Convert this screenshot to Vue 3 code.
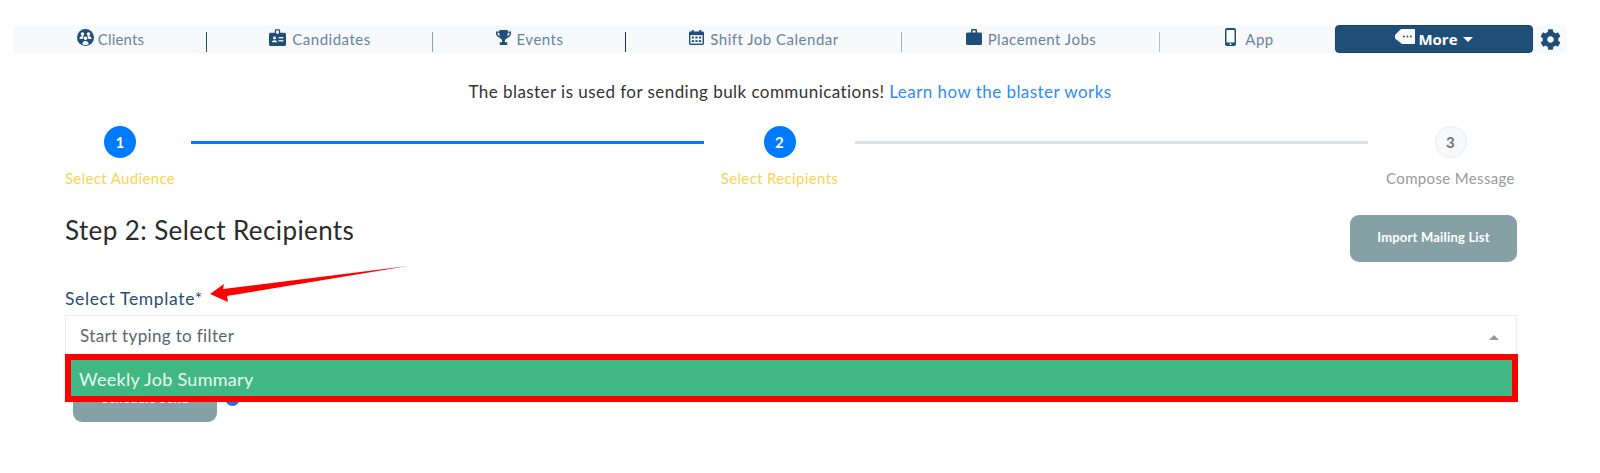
<template>
  <div class="page">
    <nav class="top-nav">
      <a v-for="item in navItems" :key="item.label" class="nav-item">
        <span class="nav-link">
          <svg class="nav-icon" :viewBox="item.box" :style="{ width: item.w + 'px', height: item.h + 'px' }" v-html="item.icon"></svg>
          <span class="nav-text">{{ item.label }}</span>
        </span>
        <i v-if="item.sep" class="nav-sep" :style="{ background: item.sep }"></i>
      </a>
      <button class="more-btn">
        <svg class="more-icon" viewBox="0 0 20 15">
          <path d="M6 0H19a1 1 0 0 1 1 1V14a1 1 0 0 1-1 1H7L0 9.500V6z" fill="#fff" />
          <circle cx="9" cy="7.500" r="1" fill="#1f4e79" />
          <circle cx="12.500" cy="7.500" r="1" fill="#1f4e79" />
          <circle cx="16" cy="7.500" r="1" fill="#1f4e79" />
        </svg>
        <span>More</span>
        <i class="more-caret"></i>
      </button>
      <svg class="gear" viewBox="0 0 512 512">
        <path fill="#1f4e79" d="M487.4 315.7l-42.6-24.6c4.3-23.2 4.3-47 0-70.2l42.6-24.6c4.9-2.8 7.1-8.6 5.5-14-11.1-35.6-30-67.8-54.7-94.6-3.8-4.1-10-5.1-14.8-2.3L380.8 110c-17.9-15.4-38.5-27.3-60.8-35.1V25.8c0-5.6-3.9-10.5-9.4-11.7-36.7-8.2-74.3-7.8-109.2 0-5.5 1.2-9.4 6.1-9.4 11.7V75c-22.2 7.9-42.8 19.8-60.8 35.1L88.7 85.5c-4.9-2.8-11-1.9-14.8 2.3-24.7 26.7-43.6 58.9-54.7 94.6-1.7 5.4.6 11.2 5.5 14L67.3 221c-4.3 23.2-4.3 47 0 70.2l-42.6 24.6c-4.9 2.8-7.1 8.6-5.5 14 11.1 35.6 30 67.8 54.7 94.6 3.8 4.1 10 5.1 14.8 2.3l42.6-24.6c17.9 15.4 38.5 27.3 60.8 35.1v49.2c0 5.6 3.9 10.5 9.4 11.7 36.7 8.2 74.3 7.8 109.2 0 5.5-1.2 9.4-6.1 9.4-11.7v-49.2c22.2-7.9 42.8-19.8 60.8-35.1l42.6 24.6c4.9 2.8 11 1.9 14.8-2.3 24.7-26.7 43.6-58.9 54.7-94.6 1.5-5.5-.7-11.3-5.6-14.1zM256 336c-44.1 0-80-35.9-80-80s35.9-80 80-80 80 35.9 80 80-35.9 80-80 80z" />
      </svg>
    </nav>

    <p class="notice">
      The blaster is used for sending bulk communications!
      <a class="notice-link">Learn how the blaster works</a>
    </p>

    <div class="content">
      <div class="stepper">
        <div class="step step-audience">
          <span class="step-dot">1</span>
          <span class="step-label">Select Audience</span>
        </div>
        <span class="step-line done"></span>
        <div class="step step-recipients">
          <span class="step-dot">2</span>
          <span class="step-label">Select Recipients</span>
        </div>
        <span class="step-line"></span>
        <div class="step step-compose todo">
          <span class="step-dot">3</span>
          <span class="step-label">Compose Message</span>
        </div>
      </div>

      <div class="head-row">
        <h2 class="step-title">Step 2: Select Recipients</h2>
        <button class="grey-btn import-btn">Import Mailing List</button>
      </div>

      <div class="form-area">
        <label class="field-label">Select Template*</label>
        <div class="select-box">
          <span>Start typing to filter</span>
          <i class="select-caret"></i>
        </div>
        <div class="below-row">
          <button class="grey-btn schedule-btn">Schedule Send</button>
          <span class="info-dot"></span>
        </div>

        <div class="option-mark">
          <div class="option">Weekly Job Summary</div>
        </div>

        <svg class="arrow" viewBox="0 0 200 40">
          <path d="M0 29L14 19L13 24L198 1L17 31L18 37z" fill="#ff0000" />
        </svg>
      </div>
    </div>
  </div>
</template>

<script setup>
const navItems = [
  {
    label: "Clients",
    box: "0 0 16 16",
    w: 17,
    h: 17,
    sep: "#1f4e79",
    icon: '<circle cx="8" cy="8" r="8" fill="#1f4e79"/><g fill="#fff"><circle cx="5.200" cy="4.800" r="1.700"/><circle cx="10.800" cy="4.800" r="1.700"/><path d="M2.300 9.500c0-2 1.200-3 2.900-3s2.900 1 2.900 3zM7.900 9.500c0-2 1.200-3 2.900-3s2.900 1 2.900 3z"/></g><circle cx="8" cy="8.800" r="2.500" fill="#1f4e79"/><circle cx="8" cy="8.800" r="1.700" fill="#fff"/><path d="M4 15c0-3 1.500-4.500 4-4.500s4 1.500 4 4.500z" fill="#1f4e79"/><path d="M5 14.300c0-2 1.200-3.100 3-3.100s3 1.100 3 3.100c-1.800.9-4.200.9-6 0z" fill="#fff"/>',
  },
  {
    label: "Candidates",
    box: "0 0 16 16",
    w: 17,
    h: 17,
    sep: "#8fa3b8",
    icon: '<path d="M1.5 3.5h4V1.2A1 1 0 0 1 6.500.2h3a1 1 0 0 1 1 1v2.300h4A1.500 1.500 0 0 1 16 5v9.500a1.500 1.500 0 0 1-1.500 1.500h-13A1.500 1.500 0 0 1 0 14.500V5a1.500 1.500 0 0 1 1.500-1.500z" fill="#1f4e79"/><rect x="6.700" y="1.400" width="2.600" height="3" fill="#f8f9fb"/><circle cx="5.200" cy="8.500" r="1.400" fill="#fff"/><path d="M2.800 12.500c0-1.300 1-2 2.400-2s2.400.7 2.400 2z" fill="#fff"/><rect x="9" y="7.600" width="4.500" height="1.200" fill="#fff"/><rect x="9" y="10.500" width="4.500" height="1.200" fill="#fff"/>',
  },
  {
    label: "Events",
    box: "0 0 16 16",
    w: 15,
    h: 15,
    sep: "#1a2f5c",
    icon: '<path d="M3.500 0h9v1.500H16v2.300c0 2.300-2.100 4.300-4.300 4.700-.6.9-1.300 1.500-2.200 1.800V13H12v3H4v-3h2.500v-2.700c-.9-.3-1.600-.9-2.200-1.800C2.100 8.100 0 6.100 0 3.800V1.500h3.500zM1.600 3v.8c0 1.100 1 2.300 2.300 2.900-.2-1-.4-2.300-.4-3.700zm12.800 0h-1.900c0 1.400-.2 2.700-.4 3.700 1.300-.6 2.300-1.800 2.300-2.900z" fill="#1f4e79"/>',
  },
  {
    label: "Shift Job Calendar",
    box: "0 0 16 16",
    w: 15,
    h: 17,
    sep: "#a3b1c0",
    icon: '<path d="M3 0h2v1.500h6V0h2v1.500h1.500A1.500 1.500 0 0 1 16 3v11.500a1.500 1.500 0 0 1-1.500 1.500h-13A1.500 1.500 0 0 1 0 14.500V3a1.500 1.500 0 0 1 1.500-1.500H3z" fill="#1f4e79"/><rect x="1.500" y="5.500" width="13" height="9" fill="#fff"/><g fill="#1f4e79"><rect x="3" y="7" width="2.400" height="2"/><rect x="6.800" y="7" width="2.400" height="2"/><rect x="10.600" y="7" width="2.400" height="2"/><rect x="3" y="10.800" width="2.400" height="2"/><rect x="6.800" y="10.800" width="2.400" height="2"/><rect x="10.600" y="10.800" width="2.400" height="2"/></g>',
  },
  {
    label: "Placement Jobs",
    box: "0 0 16 16",
    w: 16,
    h: 16,
    sep: "#b4bfca",
    icon: '<path d="M1.500 3.500H5V1.300A1.300 1.300 0 0 1 6.300 0h3.400A1.300 1.300 0 0 1 11 1.300v2.200h3.500A1.500 1.500 0 0 1 16 5v9.500a1.500 1.500 0 0 1-1.500 1.500h-13A1.500 1.500 0 0 1 0 14.500V5a1.500 1.500 0 0 1 1.500-1.500zM6.500 1.500v2h3v-2z" fill="#1f4e79"/>',
  },
  {
    label: "App",
    box: "0 0 11 18",
    w: 11,
    h: 18,
    icon: '<rect width="11" height="18" rx="2" fill="#1f4e79"/><rect x="1.500" y="2" width="8" height="12.500" fill="#fff"/><circle cx="5.500" cy="16.200" r=".9" fill="#fff"/>',
  },
];
</script>

<style>
body {
  background: #fff;
}
</style>

<style scoped>
.page {
  padding-top: 25px;
  font-family: "Lato", "Open Sans", sans-serif;
  color: #212529;
}

.top-nav {
  display: grid;
  grid-template-columns: 193px 226px 193px 276px 258px 175px 198px 34px;
  align-items: stretch;
  width: 1553px;
  height: 28px;
  margin-left: 14px;
  background: #f8f9fb;
  border-radius: 4px;
}

.nav-item {
  position: relative;
  display: flex;
  justify-content: center;
  align-items: center;
  color: #6883a0;
  font-size: 15px;
  letter-spacing: .5px;
}

.nav-link {
  display: flex;
  align-items: center;
  gap: 6px;
}

.nav-item:first-child .nav-link {
  gap: 4px;
}

.nav-item:first-child {
  letter-spacing: .2px;
}

.nav-item:nth-child(6) {
  padding-left: 4px;
}

.nav-item:nth-child(6) .nav-link {
  gap: 9px;
}

.nav-icon {
  margin-top: -4px;
}

.nav-sep {
  position: absolute;
  right: 0;
  top: 7px;
  bottom: 1px;
  width: 1px;
}

.more-btn {
  display: flex;
  justify-content: center;
  align-items: center;
  gap: 3px;
  border: 1px solid #1a4469;
  border-radius: 4px;
  background: #1f4e79;
  color: #fff;
  font: 700 15px "Open Sans", sans-serif;
  padding: 0;
}

.more-icon {
  width: 20px;
  height: 15px;
  margin-top: -6px;
}

.more-caret {
  width: 0;
  height: 0;
  margin-left: 2px;
  border-left: 5px solid transparent;
  border-right: 5px solid transparent;
  border-top: 5px solid #fff;
}

.gear {
  width: 21px;
  height: 21px;
  align-self: center;
  margin-left: 7px;
}

.notice {
  margin: 27px 0 0;
  padding-right: 20px;
  height: 24px;
  line-height: 24px;
  text-align: center;
  font-size: 17px;
  letter-spacing: .45px;
  color: #333;
}

.notice-link {
  color: #2f8cf5;
}

.content {
  margin: 0 83px 0 65px;
}

.stepper {
  display: flex;
  gap: 16px;
  margin-top: 22px;
}

.step {
  display: flex;
  flex-direction: column;
  align-items: center;
  flex-shrink: 0;
  font-size: 15px;
  letter-spacing: .35px;
  color: #fdd24e;
}

.step-audience {
  width: 110px;
}

.step-recipients {
  width: 119px;
}

.step-compose {
  width: 133px;
}

.step-dot {
  width: 32px;
  height: 32px;
  border-radius: 50%;
  background: #007bff;
  color: #fff;
  font-size: 15px;
  font-weight: 700;
  line-height: 32px;
  text-align: center;
}

.todo {
  color: #9a9a9a;
}

.todo .step-dot {
  box-sizing: border-box;
  background: #f8f9fa;
  border: 1px solid #e9ecef;
  color: #6c757d;
  line-height: 30px;
}

.step-label {
  margin-top: 11px;
  line-height: 18px;
  white-space: nowrap;
}

.step-line {
  flex: 1;
  height: 3px;
  margin-top: 15px;
  background: #dee2e6;
}

.step-line.done {
  background: #007bff;
}

.head-row {
  display: flex;
  justify-content: space-between;
  align-items: flex-start;
  margin-top: 28px;
}

.step-title {
  margin: 0;
  font-size: 26px;
  font-weight: 400;
  line-height: 30px;
  letter-spacing: .4px;
  color: #2b2b2b;
}

.grey-btn {
  border: none;
  border-radius: 9px;
  background: #86a1a6;
  color: #fff;
  font: 700 13px "Lato", sans-serif;
  letter-spacing: .2px;
  padding: 0 0 3px;
}

.import-btn {
  width: 167px;
  height: 47px;
}

.form-area {
  position: relative;
  margin-top: 25px;
}

.field-label {
  display: block;
  height: 23px;
  line-height: 23px;
  font-size: 17.500px;
  color: #1f4e79;
  letter-spacing: .64px;
}

.select-box {
  display: flex;
  justify-content: space-between;
  align-items: center;
  box-sizing: border-box;
  height: 42px;
  margin-top: 5px;
  padding: 0 17px 2px 14px;
  border: 1px solid #ececec;
  color: #5a6475;
  font-size: 17px;
  letter-spacing: .35px;
}

.select-caret {
  width: 0;
  height: 0;
  margin-top: 5px;
  border-left: 5px solid transparent;
  border-right: 5px solid transparent;
  border-bottom: 5px solid #999;
}

.below-row {
  display: flex;
  align-items: flex-start;
  gap: 8px;
  margin: 18px 0 0 8px;
}

.schedule-btn {
  width: 144px;
  height: 47px;
  padding: 0 0 1px;
}

.info-dot {
  width: 15px;
  height: 15px;
  margin-top: 16px;
  border-radius: 50%;
  background: #2a6fdb;
}

.option-mark {
  position: absolute;
  left: 0;
  right: -1px;
  top: 67px;
  height: 48px;
  box-sizing: border-box;
  border: 6px solid #ff0000;
  background: #41b883;
}

.option {
  padding-left: 8px;
  line-height: 38px;
  font-size: 18px;
  color: #eafaf2;
  letter-spacing: .3px;
}

.arrow {
  position: absolute;
  left: 145px;
  top: -22px;
  width: 200px;
  height: 40px;
}
</style>
